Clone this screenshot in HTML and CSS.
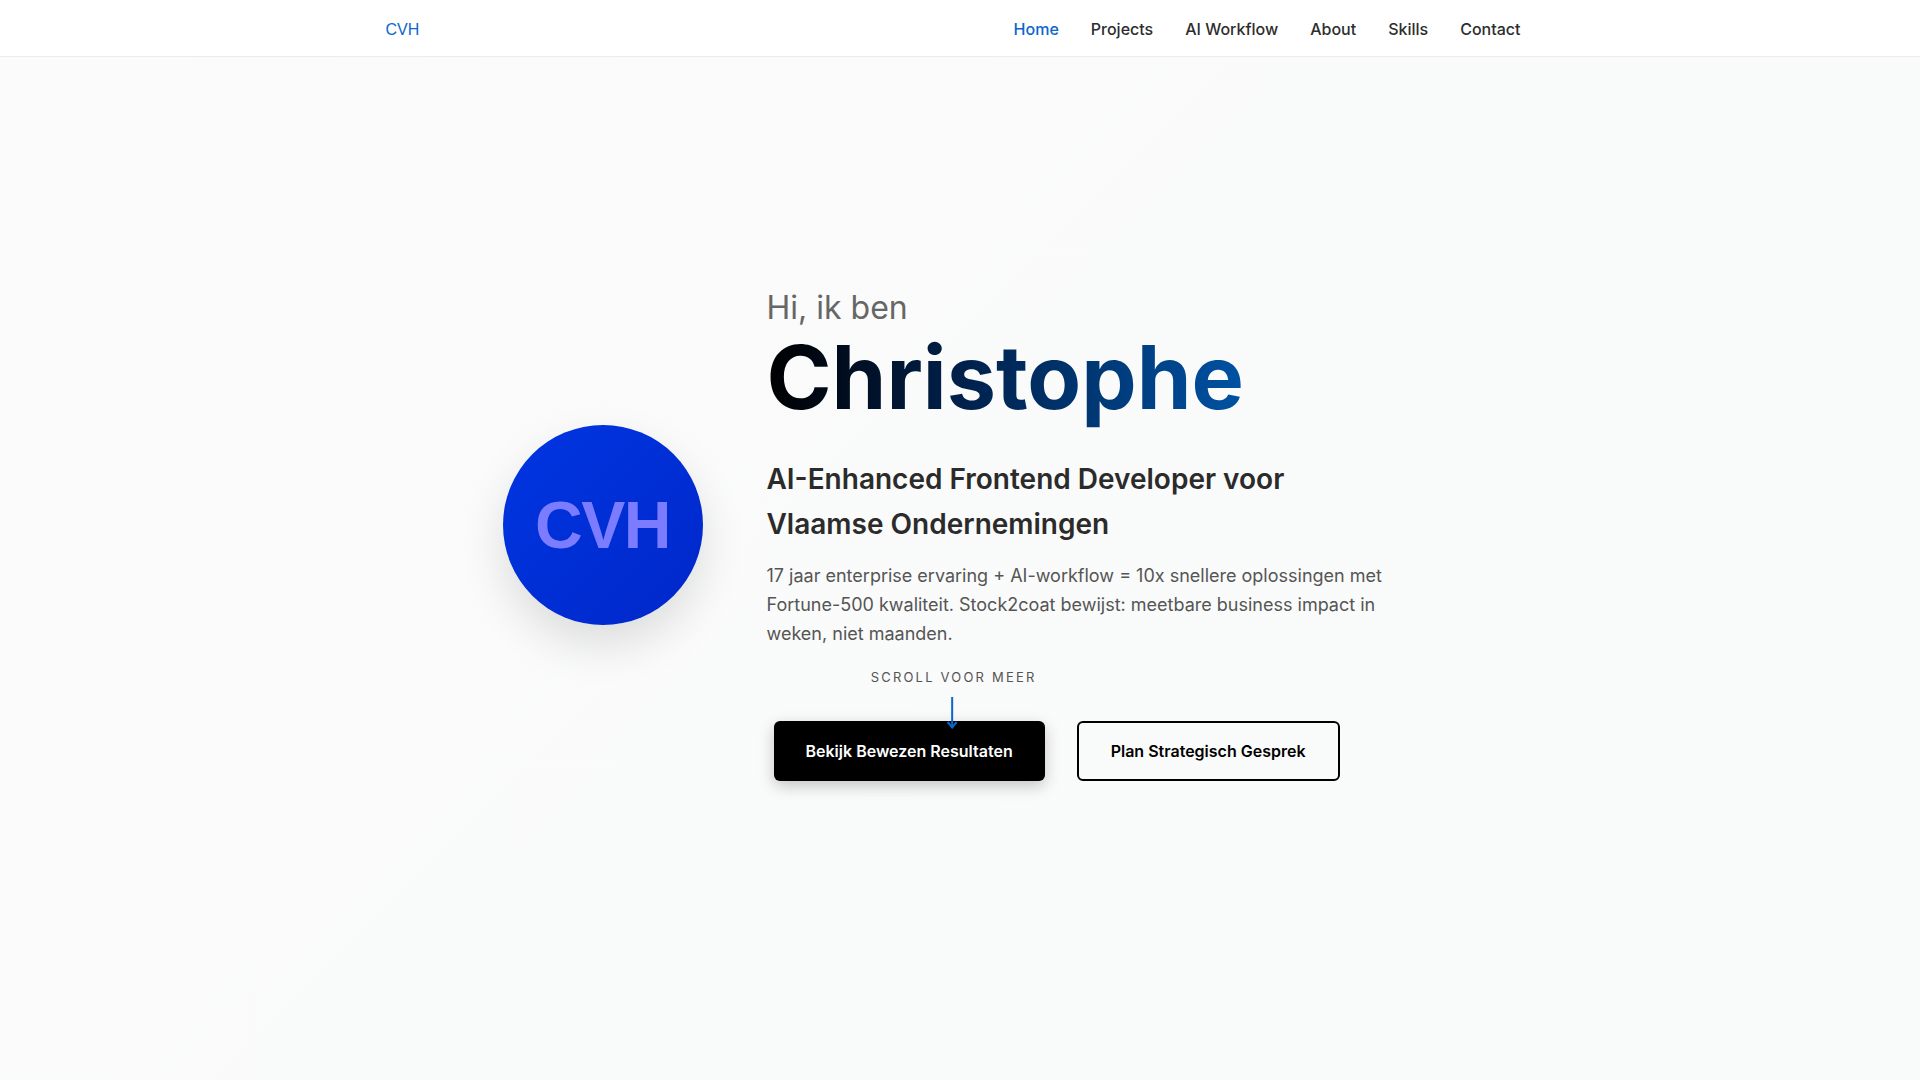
FILE: index.html
```html
<!DOCTYPE html>
<html lang="nl">
<head>
<meta charset="utf-8">
<title>CVH – Christophe</title>
<link rel="stylesheet" href="styles.css">
</head>
<body>
<header class="site-header">
  <div class="container nav-inner">
    <a class="logo" href="#">CVH</a>
    <nav class="nav-links">
      <a class="nav-link active" href="#">Home</a>
      <a class="nav-link" href="#projects">Projects</a>
      <a class="nav-link" href="#workflow">AI Workflow</a>
      <a class="nav-link" href="#about">About</a>
      <a class="nav-link" href="#skills">Skills</a>
      <a class="nav-link" href="#contact">Contact</a>
    </nav>
  </div>
</header>

<main>
  <section class="hero">
    <div class="hero-grid">
      <div class="avatar"><span class="avatar-text">CVH</span></div>
      <div class="hero-text">
        <p class="greeting">Hi, ik ben</p>
        <h1 class="name">Christophe</h1>
        <h2 class="tagline">AI-Enhanced Frontend Developer voor Vlaamse Ondernemingen</h2>
        <p class="intro">17 jaar enterprise ervaring + AI-workflow = 10x snellere oplossingen met Fortune-500 kwaliteit. Stock2coat bewijst: meetbare business impact in weken, niet maanden.</p>
        <div class="actions">
          <a class="btn btn-primary" href="#projects">Bekijk Bewezen Resultaten</a>
          <a class="btn btn-outline" href="#contact">Plan Strategisch Gesprek</a>
        </div>
      </div>
    </div>
    <div class="scroll-indicator">
      <span class="scroll-label">Scroll voor meer</span>
      <svg class="scroll-arrow" width="12" height="32" viewBox="0 0 12 32" aria-hidden="true">
        <line x1="6" y1="0" x2="6" y2="30" stroke="#0a66cc" stroke-width="2"/>
        <polyline points="1.5,25 6,30.5 10.5,25" fill="none" stroke="#0a66cc" stroke-width="2"/>
      </svg>
    </div>
  </section>
</main>
</body>
</html>
```

FILE: styles.css
```css
* { box-sizing: border-box; }

html, body {
  margin: 0;
  padding: 0;
}

body {
  font-family: "Inter", "Noto Sans", "Liberation Sans", sans-serif;
  background: linear-gradient(135deg, #fbfbfb 0%, #f9fafa 100%);
  color: #333;
  padding-right: 15px;
  min-height: 100vh;
}

a { text-decoration: none; }

.container {
  max-width: 1200px;
  margin: 0 auto;
  padding: 0 32px;
}

.site-header {
  background: #ffffff;
  border-bottom: 1px solid #ececec;
  margin-right: -15px;
  padding-right: 15px;
}

.nav-inner {
  height: 56px;
  display: flex;
  align-items: center;
  justify-content: space-between;
  padding-top: 2px;
}

.logo {
  font-family: "Liberation Sans", Arial, sans-serif;
  font-size: 16px;
  color: #0a66cc;
  margin-left: 1px;
  padding-top: 1px;
}

.nav-links {
  display: flex;
  gap: 32px;
}

.nav-link {
  font-size: 16px;
  font-weight: 500;
  color: #2d2d2d;
}

.nav-link.active { color: #0a66cc; }

.hero {
  position: relative;
  min-height: calc(100vh - 57px);
  display: flex;
  align-items: center;
  justify-content: center;
  padding-bottom: 67px;
}

.hero-grid {
  width: 900px;
  display: grid;
  grid-template-columns: 200px 1fr;
  column-gap: 64px;
  align-items: center;
}

.avatar {
  width: 200px;
  height: 200px;
  border-radius: 50%;
  background: linear-gradient(135deg, #0036e2 0%, #0027c9 100%);
  box-shadow: 0 20px 45px rgba(0, 0, 0, 0.12);
  display: flex;
  align-items: center;
  justify-content: center;
  margin-bottom: 20px;
}

.avatar-text {
  font-family: "Liberation Sans", Arial, sans-serif;
  font-weight: 700;
  font-size: 66px;
  letter-spacing: -1.5px;
  color: #7b7cff;
  line-height: 1;
}

.hero-text { min-width: 0; }

.greeting {
  margin: 3px 0 0;
  font-size: 32px;
  line-height: 32px;
  font-weight: 400;
  color: #666;
}

.name {
  margin: 0;
  display: inline-block;
  font-size: 88px;
  line-height: 1.21;
  font-weight: 700;
  background: linear-gradient(90deg, #000000 0%, #00204a 40%, #0052a3 100%);
  -webkit-background-clip: text;
  background-clip: text;
  color: transparent;
}

.tagline {
  margin: 26px 0 0;
  max-width: 610px;
  font-size: 28px;
  line-height: 1.6;
  font-weight: 600;
  color: #2b2b2b;
}

.intro {
  margin: 16px 0 0;
  font-size: 18px;
  line-height: 1.6;
  color: #555;
}

.actions {
  margin: 72px 0 0 7px;
  display: flex;
  gap: 32px;
}

.btn {
  display: inline-block;
  font-size: 16px;
  font-weight: 600;
  line-height: 24px;
  border-radius: 6px;
}

.btn-primary {
  background: #000;
  color: #fff;
  padding: 18px 32px;
  box-shadow: 0 5px 16px rgba(0, 0, 0, 0.22);
}

.btn-outline {
  background: transparent;
  color: #000;
  border: 2px solid #000;
  padding: 16px 32px;
}

.scroll-indicator {
  position: absolute;
  left: 50%;
  top: 612px;
  transform: translateX(-50%);
  display: flex;
  flex-direction: column;
  align-items: center;
  gap: 12px;
}

.scroll-label {
  font-size: 13px;
  line-height: 16px;
  letter-spacing: 2.2px;
  text-transform: uppercase;
  color: #555;
  margin-right: -2.2px;
}

.scroll-arrow { display: block; }
```
